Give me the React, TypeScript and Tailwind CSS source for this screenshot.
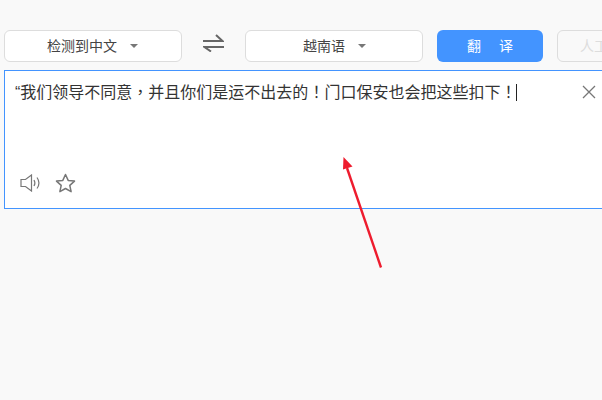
const font = 'font-["Liberation_Sans","Noto_Sans_CJK_SC",sans-serif]';

function LangSelect({ label, textClass }: { label: string; textClass: string }) {
  return (
    <div className="flex h-8 w-[178px] shrink-0 items-center rounded-md border border-[#dddddd] bg-white text-[14px] text-[#444444]">
      <span className={textClass}>{label}</span>
      <span className="ml-[13px] h-0 w-0 border-x-[4px] border-t-[4px] border-x-transparent border-t-[#777777]" />
    </div>
  );
}

// full-width punctuation sits centred in its cell in the reference
function Mark({ children }: { children: string }) {
  return <span className='font-["Noto_Sans_CJK_TC",sans-serif]'>{children}</span>;
}

export default function App() {
  return (
    <div className={`relative h-[400px] w-[602px] overflow-hidden bg-[#f9f9f9] pl-1 pt-[30px] ${font}`}>
      <div className="flex w-[720px] items-center">
        <LangSelect label="检测到中文" textClass="ml-[42px]" />
        <svg className="mx-[21px] mb-[6px] shrink-0" width="21" height="18" viewBox="0 0 21 18" fill="none" stroke="#666666" strokeWidth="2">
          <path d="M0 7h19.5L13 1" />
          <path d="M21 13H1.5l6.5 4.5" />
        </svg>
        <LangSelect label="越南语" textClass="ml-[57px]" />
        <button className="ml-[14px] h-8 w-[106px] shrink-0 rounded-md bg-[#4394ff] text-[14px] text-white">
          翻<span className="ml-[18px]">译</span>
        </button>
        <button className="ml-[14px] h-8 w-[106px] shrink-0 rounded-md border border-[#dddddd] bg-[#f9f9f9] pr-[4px] text-[14px] text-[#dddddd]">
          人工翻译
        </button>
      </div>
      <div className="mt-2 flex h-[139px] w-[720px] flex-col border border-[#4394ff] bg-white pl-[10px] pt-[8px]">
        <div className="flex w-[581px] items-start justify-between">
          <p className="flex items-center text-[16px] leading-[24px] text-[#333333]">
            <span>
              “我们领导不同意<Mark>，</Mark>并且你们是运不出去的<Mark>！</Mark>门口保安也会把这些扣下<Mark>！</Mark>
            </span>
            <span className="h-[17px] w-px bg-[#222222]" />
          </p>
          <svg className="mt-[6px] shrink-0" width="14" height="14" viewBox="0 0 14 14" fill="none" stroke="#777777" strokeWidth="1.3">
            <path d="M1 1l12 12M13 1L1 13" />
          </svg>
        </div>
        <div className="mt-auto mb-[15px] flex items-center gap-[14px] pl-[5px]">
          <svg width="21" height="18" viewBox="0 0 21 18" fill="none" stroke="#777777" strokeWidth="1.2">
            <path d="M1 5.5h4.5L11.5 1v16l-6-4.5H1z" />
            <path d="M14 6c1.2 2 1.2 4 0 6" />
            <path d="M17 3.5c2.4 3.4 2.4 7.6 0 11" />
          </svg>
          <svg width="21" height="20" viewBox="0 0 21 20" fill="none" stroke="#777777" strokeWidth="1.5">
            <path d="M10.5 1.5l2.7 5.9 6.3.7-4.7 4.3 1.3 6.3-5.6-3.2-5.6 3.2 1.3-6.3L1.5 8.1l6.3-.7z" strokeLinejoin="round" />
          </svg>
        </div>
      </div>
      <svg className="absolute left-[340px] top-[150px]" width="46" height="122" viewBox="0 0 46 122" fill="none">
        <path d="M41 117.5L7 18" stroke="#ee1c2e" strokeWidth="2.4" />
        <path d="M3.5 7l9 9.5-9.5 3z" fill="#ee1c2e" />
      </svg>
    </div>
  );
}
